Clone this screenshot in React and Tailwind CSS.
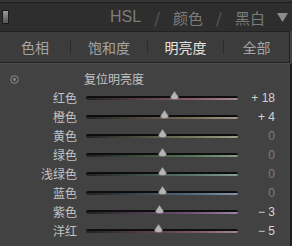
import React from 'react';

const rows = [
  { label: '红色', value: '+ 18', pos: 174, bright: true, color: '#8c5a68', end: '#a88894' },
  { label: '橙色', value: '+ 4', pos: 164, bright: true, color: '#7a6e5a', end: '#a09a88' },
  { label: '黄色', value: '0', pos: 162, bright: false, color: '#767a5c', end: '#9ea088' },
  { label: '绿色', value: '0', pos: 162, bright: false, color: '#5a7658', end: '#869e86' },
  { label: '浅绿色', value: '0', pos: 162, bright: false, color: '#587868', end: '#84a094' },
  { label: '蓝色', value: '0', pos: 162, bright: false, color: '#566a80', end: '#8494a6' },
  { label: '紫色', value: '− 3', pos: 159, bright: true, color: '#74527a', end: '#9c84a2' },
  { label: '洋红', value: '− 5', pos: 158, bright: true, color: '#7a5264', end: '#a08492' },
];

const Slider = ({ pos, color, end }) => (
  <div className="relative w-[152px] h-[6px]">
    <div
      className="absolute inset-x-0 top-[1px] h-[4px] rounded-full border-t-2 border-[#0e0e0e]"
      style={{ background: `linear-gradient(to right, #222 0%, ${color} 70%, ${end} 100%)` }}
    />
    {/* thumb */}
    <div
      className="absolute top-[-4px] w-[9px] h-[9px]"
      style={{ left: `${pos - 86 - 4}px` }}
    >
      <svg width="9" height="9" viewBox="0 0 9 9">
        <path d="M4.5 0 L8.5 6 Q8.5 8.5 6 8.5 L3 8.5 Q0.5 8.5 0.5 6 Z" fill="#b4b4b4" stroke="#5e5e5e" strokeWidth="0.6" />
      </svg>
    </div>
  </div>
);

const App = () => {
  return (
    <div
      className="w-[292px] h-[246px] bg-[#424242] flex flex-col overflow-hidden"
      style={{ fontFamily: '"Noto Sans CJK SC", "Liberation Sans", sans-serif' }}
    >
      {/* top strip */}
      <div className="h-[3px] bg-[#363636] border-b border-[#1c1c1c]" />

      {/* header */}
      <div className="h-[28px] bg-[#2e2e2e] flex items-center pl-[2px] pr-[4px]">
        <div className="w-[7px] h-[14px] rounded-[1px] border border-[#1a1a1a] bg-gradient-to-b from-[#9a9a9a] to-[#555]" />
        <div className="flex-1" />
        <div className="flex items-center gap-[13px] text-[15px] text-[#7c7c7c] leading-none">
          <span style={{ fontFamily: '"Liberation Sans", sans-serif' }} className="text-[16px]">HSL</span>
          <span className="text-[#5e5e5e]">/</span>
          <span>颜色</span>
          <span className="text-[#5e5e5e]">/</span>
          <span>黑白</span>
        </div>
        <svg className="ml-[12px]" width="11" height="9" viewBox="0 0 11 9">
          <path d="M0 0 L11 0 L5.5 9 Z" fill="#8c8c8c" />
        </svg>
      </div>

      {/* tab bar */}
      <div className="h-[32px] border-t border-b border-[#222] bg-[#3c3c3c] flex items-center text-[14px] text-[#a4a4a4] mr-[2px] border-r">
        <div className="w-[70px] text-center">色相</div>
        <div className="w-[1px] h-[14px] bg-[#2c2c2c]" />
        <div className="w-[76px] text-center">饱和度</div>
        <div className="w-[1px] h-[14px] bg-[#2c2c2c]" />
        <div className="w-[75px] text-center text-[#e4e4e4]">明亮度</div>
        <div className="w-[1px] h-[14px] bg-[#2c2c2c]" />
        <div className="flex-1 text-center">全部</div>
      </div>

      {/* content */}
      <div className="flex-1 border-t border-[#4c4c4c] border-r-2 border-r-[#1e1e1e] flex flex-col pt-[6px]">
        <div className="h-[18px] flex items-center text-[12px] text-[#c4c4c4]">
          <div className="w-[28px] flex justify-center">
            <svg width="9" height="9" viewBox="0 0 9 9">
              <circle cx="4.5" cy="4.5" r="3.8" fill="none" stroke="#8a8a8a" strokeWidth="1" />
              <circle cx="4.5" cy="4.5" r="1.4" fill="#8a8a8a" />
            </svg>
          </div>
          <span className="ml-[56px]">复位明亮度</span>
        </div>
        {rows.map((r) => (
          <div key={r.label} className="h-[19px] flex items-center text-[12px]">
            <div className="w-[77px] text-right text-[#c4c4c4]">{r.label}</div>
            <div className="ml-[9px]">
              <Slider pos={r.pos} color={r.color} end={r.end} />
            </div>
            <div
              className={`w-[37px] text-right text-[12px] ${r.bright ? 'text-[#d4d4d4]' : 'text-[#7e7e7e]'}`}
              style={{ fontFamily: '"Liberation Sans", sans-serif' }}
            >
              {r.value}
            </div>
          </div>
        ))}
      </div>
    </div>
  );
};

export default App;
